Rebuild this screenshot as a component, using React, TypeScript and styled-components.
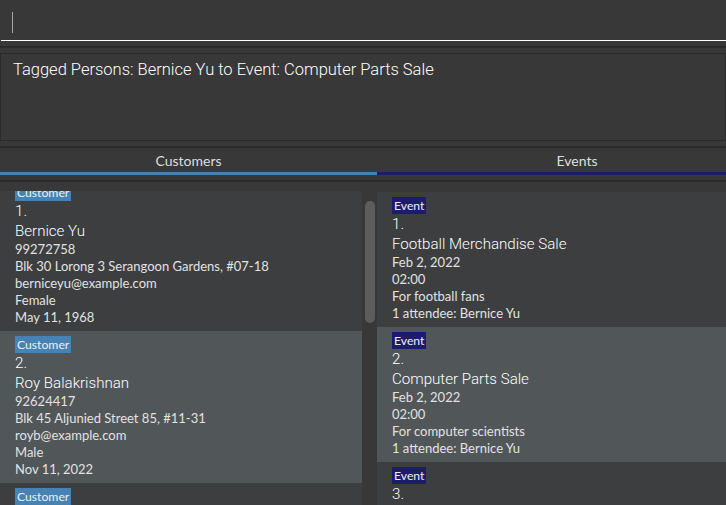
import React from "react";
import styled, { createGlobalStyle } from "styled-components";

const GlobalStyle = createGlobalStyle`
  html, body { margin: 0; padding: 0; background: #383838; }
  body { font-family: "Lato", "Open Sans", sans-serif; }
  * { box-sizing: border-box; }
`;

const Root = styled.div`
  width: 726px;
  height: 505px;
  overflow: hidden;
  background: #383838;
  display: flex;
  flex-direction: column;
`;

const CommandBox = styled.div`
  flex: none;
  height: 41px;
  margin-left: 1px;
  padding-left: 11px;
  border-bottom: 1px solid #ffffff;
  display: flex;
  align-items: center;
`;

const Caret = styled.span`
  display: block;
  width: 1px;
  height: 21px;
  margin-top: 4px;
  background: #a8a8a8;
`;

const Separator = styled.div<{ $top: number; $bottom: number }>`
  flex: none;
  height: 2px;
  margin: ${(p) => p.$top}px 0 ${(p) => p.$bottom}px;
  background: #2b2b2b;
`;

const ResultBox = styled.div`
  flex: none;
  height: 88px;
  border: 1px solid #2b2b2b;
  padding: 6px 12px;
  color: #ffffff;
  font-family: "Roboto", sans-serif;
  font-weight: 300;
  font-size: 16.5px;
  line-height: 20px;
`;

const Columns = styled.div`
  display: grid;
  grid-template-columns: 377px 400px;
`;

const TabLabel = styled.div`
  height: 24px;
  display: flex;
  align-items: center;
  justify-content: center;
  color: #dedede;
  font-size: 14px;
  padding-top: 1px;
`;

const TabIndicator = styled.div<{ $color: string }>`
  height: 3px;
  background: ${(p) => p.$color};
`;

const ListsRow = styled(Columns)`
  flex: 1;
  min-height: 0;
`;

const LeftPane = styled.div`
  display: grid;
  grid-template-columns: 362px 15px;
  min-height: 0;
  overflow: hidden;
`;

const Viewport = styled.div`
  overflow: hidden;
  min-height: 0;
`;

const Scroller = styled.div<{ $offset: number }>`
  margin-top: ${(p) => -p.$offset}px;
`;

const ScrollTrack = styled.div`
  background: #383838;
  padding: 10px 2px 0 3px;
`;

const ScrollThumb = styled.div`
  height: 122px;
  border-radius: 5px;
  background: #5d5d5d;
`;

const Card = styled.div<{ $odd: boolean }>`
  background: ${(p) => (p.$odd ? "#515658" : "#3c3e3f")};
  padding: 5px 15px;
  display: flex;
  flex-direction: column;
  align-items: flex-start;
`;

const Tag = styled.span<{ $color: string }>`
  display: inline-block;
  height: 17px;
  line-height: 17px;
  padding: 0 2px;
  font-size: 12.2px;
  color: #eeeeee;
  background: ${(p) => p.$color};
`;

const BigLine = styled.div`
  height: 20px;
  line-height: 20px;
  font-family: "Roboto", sans-serif;
  font-size: 15.1px;
  font-weight: 300;
  color: #ffffff;
  white-space: nowrap;
`;

const SmallLine = styled.div`
  height: 17px;
  line-height: 17px;
  font-size: 13px;
  color: #e2e2e2;
  white-space: nowrap;
`;

type Customer = { name: string; phone: string; address: string; email: string; gender: string; birthday: string };
type EventItem = { title: string; date: string; time: string; desc: string; attendees: string };

const customers: Customer[] = [
  { name: "Bernice Yu", phone: "99272758", address: "Blk 30 Lorong 3 Serangoon Gardens, #07-18", email: "berniceyu@example.com", gender: "Female", birthday: "May 11, 1968" },
  { name: "Roy Balakrishnan", phone: "92624417", address: "Blk 45 Aljunied Street 85, #11-31", email: "royb@example.com", gender: "Male", birthday: "Nov 11, 2022" },
  { name: "David Li", phone: "91031282", address: "Blk 436 Serangoon Gardens Street 26, #16-43", email: "lidavid@example.com", gender: "Male", birthday: "Jan 1, 1990" },
];

const events: EventItem[] = [
  { title: "Football Merchandise Sale", date: "Feb 2, 2022", time: "02:00", desc: "For football fans", attendees: "1 attendee: Bernice Yu" },
  { title: "Computer Parts Sale", date: "Feb 2, 2022", time: "02:00", desc: "For computer scientists", attendees: "1 attendee: Bernice Yu" },
  { title: "Book Fair", date: "Mar 3, 2022", time: "10:00", desc: "For book lovers", attendees: "0 attendees" },
];

const CustomerCard = ({ c, i }: { c: Customer; i: number }) => (
  <Card $odd={i % 2 === 1}>
    <Tag $color="#4682b4">Customer</Tag>
    <BigLine>{i + 1}.</BigLine>
    <BigLine>{c.name}</BigLine>
    <SmallLine>{c.phone}</SmallLine>
    <SmallLine>{c.address}</SmallLine>
    <SmallLine>{c.email}</SmallLine>
    <SmallLine>{c.gender}</SmallLine>
    <SmallLine>{c.birthday}</SmallLine>
  </Card>
);

const EventCard = ({ e, i }: { e: EventItem; i: number }) => (
  <Card $odd={i % 2 === 1}>
    <Tag $color="#1c1c6e">Event</Tag>
    <BigLine>{i + 1}.</BigLine>
    <BigLine>{e.title}</BigLine>
    <SmallLine>{e.date}</SmallLine>
    <SmallLine>{e.time}</SmallLine>
    <SmallLine>{e.desc}</SmallLine>
    <SmallLine>{e.attendees}</SmallLine>
  </Card>
);

export default function App() {
  return (
    <>
      <GlobalStyle />
      <Root>
        <CommandBox>
          <Caret />
        </CommandBox>
        <Separator $top={5} $bottom={5} />
        <ResultBox>Tagged Persons: Bernice Yu to Event: Computer Parts Sale</ResultBox>
        <Separator $top={5} $bottom={0} />
        <Columns>
          <TabLabel>Customers</TabLabel>
          <TabLabel>Events</TabLabel>
          <TabIndicator $color="#4682b4" />
          <TabIndicator $color="#1c1c6e" />
        </Columns>
        <Separator $top={5} $bottom={9} />
        <ListsRow>
          <LeftPane>
            <Viewport>
              <Scroller $offset={12}>
                {customers.map((c, i) => (
                  <CustomerCard key={c.name} c={c} i={i} />
                ))}
              </Scroller>
            </Viewport>
            <ScrollTrack>
              <ScrollThumb />
            </ScrollTrack>
          </LeftPane>
          <Viewport>
            <Scroller $offset={-1}>
              {events.map((e, i) => (
                <EventCard key={e.title} e={e} i={i} />
              ))}
            </Scroller>
          </Viewport>
        </ListsRow>
      </Root>
    </>
  );
}
